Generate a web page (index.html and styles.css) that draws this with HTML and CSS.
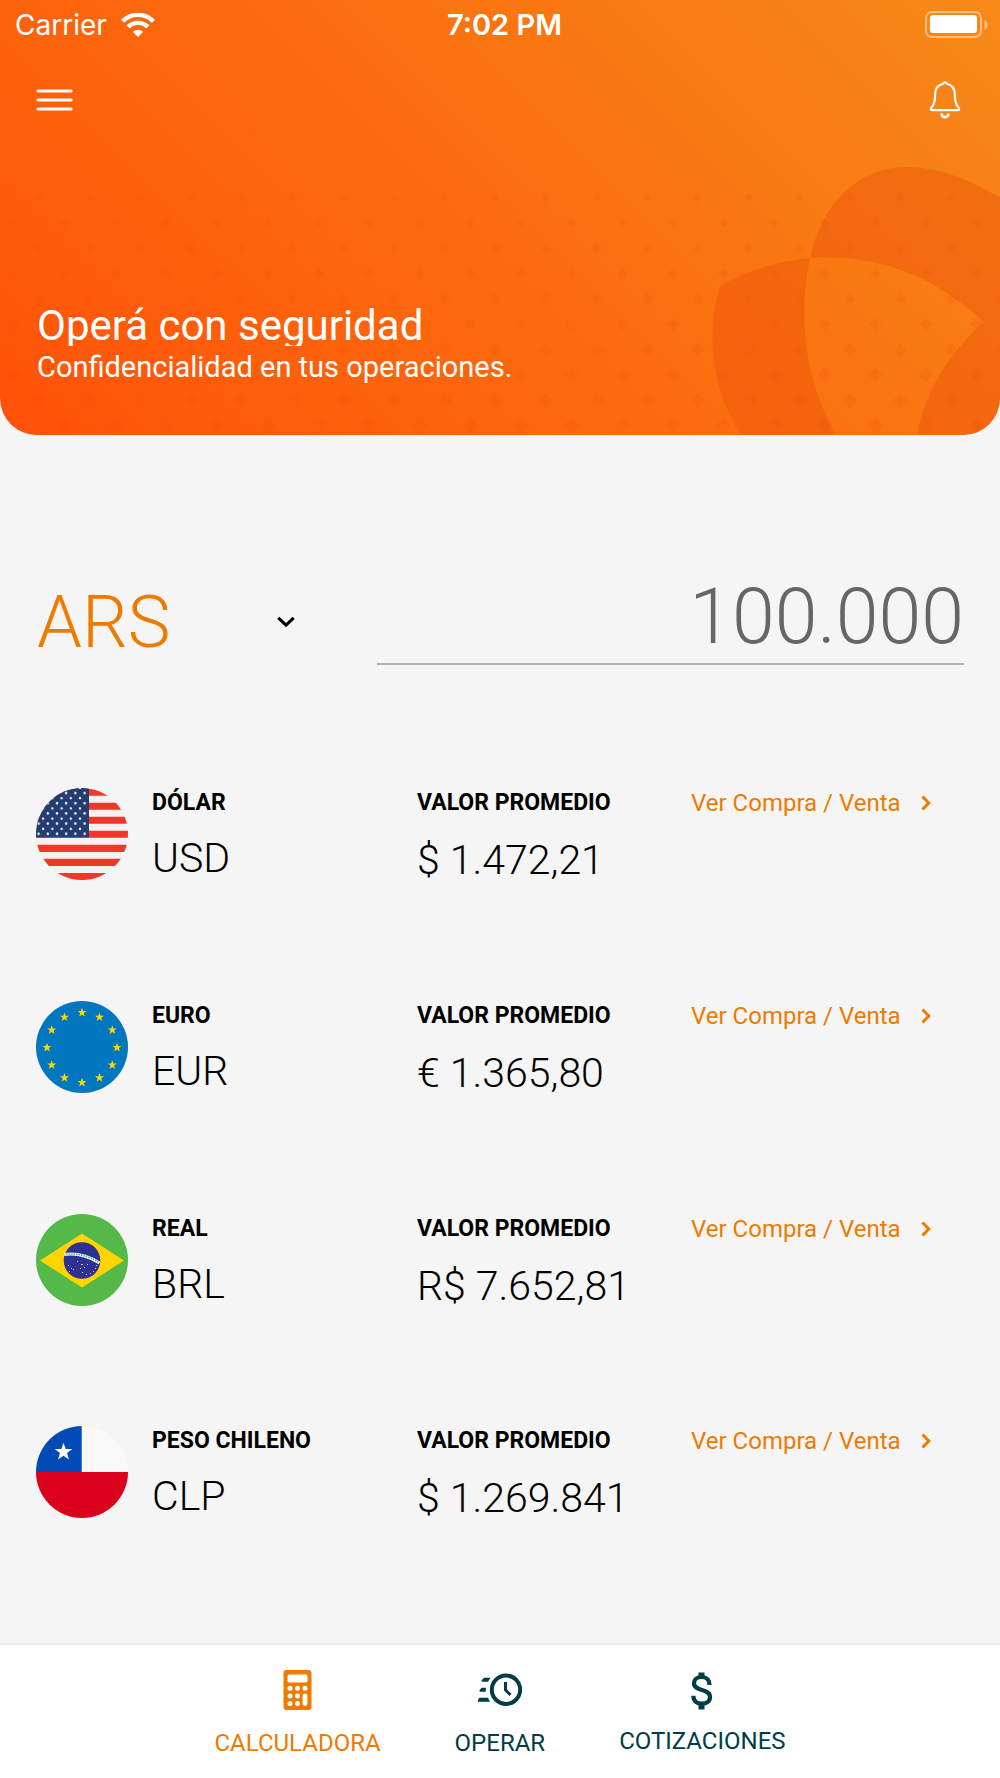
FILE: index.html
```html
<!DOCTYPE html>
<html lang="es">
<head>
<meta charset="utf-8">
<meta name="viewport" content="width=device-width, initial-scale=1">
<title>Calculadora</title>
<link rel="stylesheet" href="styles.css">
</head>
<body>
<div class="app">
  <header class="hero">
    <svg class="hero-dots" aria-hidden="true">
      <defs>
        <pattern id="dots" width="50.67" height="435" patternUnits="userSpaceOnUse">
          <path d="M39.3 193.2l4.5 4.5-4.5 4.5-4.5-4.5zM14 218.2l4.8 4.8-4.8 4.8-4.8-4.8zM39.3 243.2l5.2 5.2-5.2 5.2-5.2-5.2zM14 268.1l5.6 5.6-5.6 5.6-5.6-5.6zM39.3 293l6 6-6 6-6-6zM14 317.9l6.5 6.5-6.5 6.5-6.5-6.5zM39.3 342.7l7 7-7 7-7-7zM14 367.5l7.5 7.5-7.5 7.5-7.5-7.5zM39.3 392.4l8 8-8 8-8-8zM14 417.2l8.5 8.5-8.5 8.5-8.5-8.5z"/>
        </pattern>
      </defs>
      <rect width="100%" height="100%" fill="url(#dots)"/>
    </svg>
    <svg class="hero-mark" viewBox="0 0 300 275" aria-hidden="true">
      <path fill-rule="evenodd" d="M20 126C49 109 80 101 110 98C182 94 236 118 284 162C248 194 225 232 217 275H41C12 228 5 178 20 126ZM300 38C262 14 230 7 206 7C157 8 122 44 110 98C97 160 106 222 136 275H300Z"/>
    </svg>
    <div class="status">
      <div class="carrier">Carrier
        <svg width="34" height="24" viewBox="0 0 34 24" aria-hidden="true"><g fill="none" stroke="#fff" stroke-width="4.4"><path d="M1.6 8.2a22 22 0 0 1 30.8 0"/><path d="M7.2 13.900a14 14 0 0 1 19.6 0"/></g><path fill="#fff" d="M17 24l-5.2-5.3a7.6 7.6 0 0 1 10.4 0z"/></svg>
      </div>
      <time class="clock">7:02 PM</time>
      <svg class="battery" width="63" height="28" viewBox="0 0 63 28" aria-hidden="true"><rect x="1" y="1" width="55" height="25" rx="6" fill="none" stroke="#fff" stroke-opacity=".45" stroke-width="2"/><rect x="5" y="4" width="47" height="18" rx="3" fill="#fff"/><path fill="#fff" fill-opacity=".5" d="M59.500 9c4 1.500 4 8.500 0 10z"/></svg>
    </div>
    <div class="toolbar">
      <button class="icon-button" type="button" aria-label="Menú"><svg width="38" height="40" viewBox="0 0 38 40"><path d="M2 11h33M2 20h33M2 29h33" stroke="#fff" stroke-width="3.200" stroke-linecap="round"/></svg></button>
      <button class="icon-button" type="button" aria-label="Notificaciones"><svg width="32" height="40" viewBox="0 0 32 40" fill="none" stroke="#fff" stroke-width="2.200" stroke-linecap="round" stroke-linejoin="round"><path d="M14.200 3.700a1.900 1.900 0 0 1 3.600 0c5.500 1.500 8 5.500 8 10 0 6.500.5 10.500 4 14.300.7.900.3 2.200-.8 2.200H3c-1.100 0-1.500-1.300-.8-2.200 3.500-3.800 4-7.800 4-14.300 0-4.500 2.500-8.500 8-10z"/><path stroke-width="2.800" d="M12.700 34.500c.7 3.600 5.900 3.600 6.600 0"/></svg></button>
    </div>
    <div class="hero-copy">
      <h1 class="hero-title">Operá con seguridad</h1>
      <p class="hero-text">Confidencialidad en tus operaciones.</p>
    </div>
  </header>

  <main class="content">
    <form class="converter">
      <div class="currency">
        <select class="currency-select" aria-label="Moneda"><option>ARS</option><option>USD</option></select>
        <svg class="currency-arrow" width="18" height="12" viewBox="0 0 18 12" aria-hidden="true"><path d="M1.300 1.800L9 9.200l7.700-7.400" fill="none" stroke="#000" stroke-width="3"/></svg>
      </div>
      <input class="amount" type="text" inputmode="numeric" value="100.000" aria-label="Importe">
    </form>

    <ul class="rates">
      <li class="rate">
        <svg class="flag" viewBox="0 0 92 92" aria-hidden="true">
          <defs>
            <clipPath id="round"><circle cx="46" cy="46" r="46"/></clipPath>
            <pattern id="stars" x="-2" y="0" width="9.200" height="10.200" patternUnits="userSpaceOnUse"><circle cx="4.600" cy="5" r="1.200" fill="#fff"/><path d="M-1.200 0a1.200 1.200 0 0 0 2.400 0zM8 0a1.200 1.200 0 0 0 2.400 0zM-1.200 10.200a1.200 1.200 0 0 1 2.400 0zM8 10.200a1.200 1.200 0 0 1 2.400 0z" fill="#fff"/></pattern>
            <path id="star" d="M0-10 2.400-3.200 9.500-3.100 3.800 1.200 5.900 8.100 0 4-5.900 8.100-3.800 1.200-9.500-3.100-2.400-3.200z"/>
          </defs>
          <g clip-path="url(#round)"><path fill="#f2f2f2" d="M0 0h92v92H0z"/><path stroke="#ef3829" stroke-width="7.100" d="M0 4.300h92M0 18.300h92M0 32.300h92M0 46.300h92M0 60.400h92M0 74.400h92M0 88.500h92"/><path fill="#243c72" d="M0 0h53v49.500H0z"/><path fill="url(#stars)" d="M0 0h52v49H0z"/></g>
        </svg>
        <div class="rate-currency"><h2 class="rate-label">DÓLAR</h2><p class="rate-value">USD</p></div>
        <div class="rate-average"><h3 class="rate-label">VALOR PROMEDIO</h3><p class="rate-value rate-price">$ 1.472,21</p></div>
        <a class="rate-link" href="#usd">Ver Compra / Venta <svg width="10" height="16" viewBox="0 0 10 16" aria-hidden="true"><path d="M1.500 1.500L7.800 8l-6.300 6.500"/></svg></a>
      </li>
      <li class="rate">
        <svg class="flag" viewBox="0 0 92 92" aria-hidden="true">
          <circle cx="46" cy="46" r="46" fill="#0077bf"/>
          <g fill="#ffd500"><use href="#star" transform="translate(46 11.500) scale(.48)"/><use href="#star" transform="translate(63.500 16.200) scale(.48)"/><use href="#star" transform="translate(76.300 29) scale(.48)"/><use href="#star" transform="translate(81 46.500) scale(.48)"/><use href="#star" transform="translate(76.300 64) scale(.48)"/><use href="#star" transform="translate(63.500 76.800) scale(.48)"/><use href="#star" transform="translate(46 81.500) scale(.48)"/><use href="#star" transform="translate(28.500 76.800) scale(.48)"/><use href="#star" transform="translate(15.700 64) scale(.48)"/><use href="#star" transform="translate(11 46.500) scale(.48)"/><use href="#star" transform="translate(15.700 29) scale(.48)"/><use href="#star" transform="translate(28.500 16.200) scale(.48)"/></g>
        </svg>
        <div class="rate-currency"><h2 class="rate-label">EURO</h2><p class="rate-value">EUR</p></div>
        <div class="rate-average"><h3 class="rate-label">VALOR PROMEDIO</h3><p class="rate-value rate-price">€ 1.365,80</p></div>
        <a class="rate-link" href="#eur">Ver Compra / Venta <svg width="10" height="16" viewBox="0 0 10 16" aria-hidden="true"><path d="M1.500 1.500L7.800 8l-6.300 6.500"/></svg></a>
      </li>
      <li class="rate">
        <svg class="flag" viewBox="0 0 92 92" aria-hidden="true">
          <circle cx="46" cy="46" r="46" fill="#54b948"/><path fill="#ffd400" d="M4 46.500L46 19.500l42 27-42 27z"/><circle cx="46" cy="46.500" r="18.300" fill="#2e3192"/><path d="M28.300 40.500c12-1.500 24 1.500 35.200 8.500" fill="none" stroke="#e8f3ee" stroke-width="3"/><path d="M30 40.300c12-1 22 1.500 32 7.500" fill="none" stroke="#54b98a" stroke-width="1.400" stroke-dasharray="1.500 1"/><path fill="#c9cae8" d="M32 51h1v1h-1zM35 54h1v1h-1zM33 57h1v1h-1zM37 55h1v1h-1zM41 47h1v1h-1zM45 50h2v1h-2zM44 54h1v1h-1zM48 53h1v1h-1zM51 50h1v1h-1zM46 58h1v1h-1zM50 60h1v1h-1zM54 59h1v1h-1zM57 57h1v1h-1zM59 54h1v1h-1zM55 62h1v1h-1zM60 51h1v1h-1z"/>
        </svg>
        <div class="rate-currency"><h2 class="rate-label">REAL</h2><p class="rate-value">BRL</p></div>
        <div class="rate-average"><h3 class="rate-label">VALOR PROMEDIO</h3><p class="rate-value rate-price">R$ 7.652,81</p></div>
        <a class="rate-link" href="#brl">Ver Compra / Venta <svg width="10" height="16" viewBox="0 0 10 16" aria-hidden="true"><path d="M1.500 1.500L7.800 8l-6.300 6.500"/></svg></a>
      </li>
      <li class="rate">
        <svg class="flag" viewBox="0 0 92 92" aria-hidden="true">
          <g clip-path="url(#round)"><path fill="#f9f9f9" d="M0 0h92v46H0z"/><path fill="#004bb5" d="M0 0h45.700v46H0z"/><path fill="#db001b" d="M0 46h92v46H0z"/><use href="#star" fill="#fff" transform="translate(27.500 26) scale(.93)"/></g>
        </svg>
        <div class="rate-currency"><h2 class="rate-label">PESO CHILENO</h2><p class="rate-value">CLP</p></div>
        <div class="rate-average"><h3 class="rate-label">VALOR PROMEDIO</h3><p class="rate-value rate-price">$ 1.269.841</p></div>
        <a class="rate-link" href="#clp">Ver Compra / Venta <svg width="10" height="16" viewBox="0 0 10 16" aria-hidden="true"><path d="M1.500 1.500L7.800 8l-6.300 6.500"/></svg></a>
      </li>
    </ul>
  </main>

  <nav class="tabs">
    <a class="tab tab-active" href="#calculadora" aria-current="page">
      <svg width="44" height="42" viewBox="0 0 44 42" aria-hidden="true"><path fill="currentColor" fill-rule="evenodd" d="M10.500 0h22a3 3 0 0 1 3 3v34a3 3 0 0 1-3 3h-22a3 3 0 0 1-3-3V3a3 3 0 0 1 3-3zM13 4.500a1.500 1.500 0 0 0-1.500 1.500v5A1.500 1.500 0 0 0 13 12.500h17a1.500 1.500 0 0 0 1.500-1.500V6A1.500 1.500 0 0 0 30 4.500z"/><g fill="#fff"><circle cx="14" cy="18.300" r="2.500"/><circle cx="21.500" cy="18.300" r="2.500"/><circle cx="29" cy="18.300" r="2.500"/><circle cx="14" cy="26" r="2.500"/><circle cx="21.500" cy="26" r="2.500"/><circle cx="14" cy="33.500" r="2.500"/><circle cx="21.500" cy="33.500" r="2.500"/><rect x="26.600" y="23.500" width="4.800" height="12.500" rx="2.400"/></g></svg>
      CALCULADORA
    </a>
    <a class="tab" href="#operar">
      <svg width="44" height="42" viewBox="0 0 44 42" fill="none" stroke="currentColor" stroke-width="4" aria-hidden="true"><circle cx="28" cy="19.700" r="14.200"/><path stroke-width="3" d="M27.500 12v8l5 5"/><path fill="currentColor" stroke="none" d="M6 7.700h6.500L10 11.700H4.500a1 1 0 0 1-.8-1.400zM3.500 17.700h4.300v4H2.500a1 1 0 0 1-.9-1.400zM1.500 27.700h8.500l2 4H.500a1 1 0 0 1-.8-1.400z"/></svg>
      OPERAR
    </a>
    <a class="tab" href="#cotizaciones">
      <svg width="44" height="40" viewBox="0 0 44 40" fill="none" stroke="currentColor" aria-hidden="true"><path stroke-width="4.200" d="M29.500 15c0-5-2.800-8-7.800-8-4.900 0-7.700 2.700-7.700 6.300 0 8.700 16 4.900 16 13.700 0 4.200-3.200 6.700-8.100 6.700-5.300 0-8.500-2.700-8.500-8"/><path stroke-width="6" d="M21.500 2.500v5M21.500 34v5.500"/></svg>
      COTIZACIONES
    </a>
  </nav>
</div>
</body>
</html>
```
FILE: styles.css
```css
* {
  box-sizing: border-box;
}

body,
h1,
h2,
h3,
p,
ul {
  margin: 0;
  padding: 0;
}

body {
  background: #f5f5f5;
  color: #000;
  font-family: Roboto, "Liberation Sans", sans-serif;
  font-size: 24px;
  line-height: 28px;
}

.app {
  display: flex;
  flex-direction: column;
  min-height: 100vh;
}

/* Header */
.hero {
  position: relative;
  overflow: hidden;
  padding-bottom: 47px;
  border-radius: 0 0 37px 37px;
  background: linear-gradient(45deg, #ff5208, #fb6d0f 50%, #f68a18);
  color: #fff;
}

.hero-dots {
  position: absolute;
  inset: 0;
  width: 100%;
  height: 100%;
  fill: #f04a08;
  fill-opacity: 0.4;
}

.hero-mark {
  position: absolute;
  right: 0;
  bottom: 0;
  width: 300px;
  fill: #eb500a;
  fill-opacity: 0.4;
}

.status,
.toolbar,
.hero-copy {
  position: relative;
}

.status {
  display: grid;
  grid-template-columns: 1fr auto 1fr;
  align-items: center;
  height: 50px;
  padding: 0 12px 0 15px;
  font-family: Inter, "Liberation Sans", sans-serif;
  font-size: 28px;
}

.carrier {
  display: flex;
  align-items: center;
  gap: 14px;
}

.clock {
  padding-left: 6px;
  font-size: 29px;
  font-weight: 600;
}

.battery {
  justify-self: end;
}

.toolbar {
  display: flex;
  align-items: center;
  justify-content: space-between;
  height: 100px;
  padding: 0 39px 0 36px;
}

.icon-button {
  display: flex;
  padding: 0;
  border: 0;
  background: none;
}

.hero-copy {
  padding: 150px 37px 0;
}

.hero-title {
  overflow: hidden;
  height: 46px;
  font-size: 42px;
  font-weight: 400;
  line-height: 52px;
}

.hero-text {
  font-size: 29px;
  line-height: 42px;
}

/* Converter */
.content {
  display: flex;
  flex: 1;
  flex-direction: column;
}

.converter {
  display: grid;
  grid-template-columns: 260px 1fr;
  gap: 80px;
  padding: 140px 36px 0 37px;
}

.currency {
  position: relative;
  display: flex;
  align-items: center;
}

.currency-select {
  width: 100%;
  padding: 3px 0 0;
  border: 0;
  appearance: none;
  background: none;
  color: #ee7a00;
  font: 300 72px/90px Roboto, sans-serif;
}

.currency-arrow {
  position: absolute;
  right: 2px;
}

.amount {
  width: 100%;
  height: 90px;
  padding: 0 0 4px;
  border: 0;
  border-bottom: 2px solid #b0b0b0;
  background: none;
  color: #666;
  font: 300 77px/84px Roboto, sans-serif;
  text-align: right;
}

/* Rates */
.rates {
  display: grid;
  flex: 1;
  grid-auto-rows: 1fr;
  padding: 120px 0 4px;
  list-style: none;
}

.rate {
  display: grid;
  grid-template-columns: 92px 241px 250px 1fr;
  column-gap: 24px;
  align-items: start;
  padding: 0 36px;
}

.flag {
  display: block;
  width: 92px;
  height: 92px;
}

.rate-label {
  font-size: 23px;
  font-weight: 700;
  line-height: 30px;
}

.rate-value {
  padding-top: 16px;
  font-size: 41px;
  font-weight: 300;
  line-height: 48px;
}

.rate-price {
  padding-top: 18px;
}

.rate-link {
  display: flex;
  align-items: center;
  gap: 20px;
  color: #ee7a00;
  line-height: 30px;
  text-decoration: none;
  white-space: nowrap;
}

.rate-link svg {
  fill: none;
  stroke: currentColor;
  stroke-width: 3;
}

/* Bottom navigation */
.tabs {
  display: flex;
  justify-content: center;
  gap: 74px;
  height: 135px;
  padding-top: 25px;
  border-top: 2px solid #ebebee;
  background: #fff;
}

.tab {
  display: flex;
  flex-direction: column;
  align-items: center;
  gap: 17px;
  color: #003d47;
  text-decoration: none;
}

.tab-active {
  color: #ee7a00;
}
```
